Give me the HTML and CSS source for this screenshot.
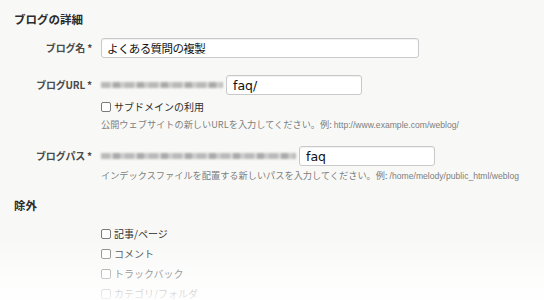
FILE: index.html
```html
<!DOCTYPE html>
<html lang="ja">
  <head>
    <meta charset="UTF-8" />
    <title>ブログの詳細</title>
    <link rel="stylesheet" href="styles.css">
  </head>
  <body>
    <h2 class="section-title">ブログの詳細</h2>

    <div class="field-row first">
      <label class="field-label" for="blogName">ブログ名 *</label>
      <div class="field-body">
        <input id="blogName" class="text-input wide" type="text" value="よくある質問の複製" />
      </div>
    </div>

    <div class="field-row">
      <label class="field-label" for="blogUrl">ブログURL *</label>
      <div class="field-body">
        <div class="inline-field">
          <span class="masked masked-url"></span>
          <input id="blogUrl" class="text-input short latin" type="text" value="faq/" />
        </div>
        <label class="check-line sub">
          <span class="box"></span>サブドメインの利用
        </label>
        <p class="hint">公開ウェブサイトの新しいURLを入力してください。例: <span class="latin-hint">http://www.example.com/weblog/</span></p>
      </div>
    </div>

    <div class="field-row">
      <label class="field-label" for="blogPath">ブログパス *</label>
      <div class="field-body">
        <div class="inline-field">
          <span class="masked masked-path"></span>
          <input id="blogPath" class="text-input short latin" type="text" value="faq" />
        </div>
        <p class="hint tight">インデックスファイルを配置する新しいパスを入力してください。例: <span class="latin-hint">/home/melody/public_html/weblog</span></p>
      </div>
    </div>

    <h2 class="section-title exclude">除外</h2>

    <ul class="exclude-list">
      <li class="check-line"><span class="box"></span>記事/ページ</li>
      <li class="check-line"><span class="box"></span>コメント</li>
      <li class="check-line"><span class="box"></span>トラックバック</li>
      <li class="check-line"><span class="box"></span>カテゴリ/フォルダ</li>
    </ul>

    <div class="fade"></div>
  </body>
</html>
```

FILE: styles.css
```css
body {
  margin: 0;
  padding: 12px 0 0;
  background-color: #f8f9f7;
  color: #333;
  font-family: "Noto Sans CJK JP", "Liberation Sans", sans-serif;
  height: 288px;
  overflow: hidden;
  position: relative;
}
.section-title {
  margin: 0 0 0 14px;
  font-size: 11.5px;
  line-height: 14px;
  font-weight: bold;
  color: #2b2b2b;
}
.section-title.exclude {
  margin-top: 16px;
}
.field-row {
  display: grid;
  grid-template-columns: 92px 1fr;
  column-gap: 9px;
  align-items: start;
  margin-top: 17px;
}
.field-row.first {
  margin-top: 12px;
}
.field-row + .field-row + .field-row {
  margin-top: 15px;
}
.field-label {
  text-align: right;
  font-size: 10px;
  line-height: 20px;
  font-weight: bold;
  color: #4a4a4a;
  letter-spacing: -0.2px;
}
.field-body {
  display: flex;
  flex-direction: column;
  align-items: flex-start;
}
.inline-field {
  display: flex;
  align-items: center;
  gap: 3px;
}
.text-input {
  box-sizing: border-box;
  height: 20px;
  margin: 0;
  padding: 0 5px;
  border: 1px solid #c9c9c9;
  border-radius: 3px;
  background-color: #fff;
  box-shadow: inset 0 1px 1px rgba(0, 0, 0, 0.06);
  font-family: "Noto Sans CJK JP", sans-serif;
  font-size: 11.5px;
  letter-spacing: -0.6px;
  color: #111;
  outline: none;
}
.text-input.wide {
  width: 318px;
}
.text-input.short {
  width: 136px;
}
.text-input.latin {
  font-family: "DejaVu Sans", sans-serif;
  font-size: 12.5px;
  letter-spacing: 0;
  padding-left: 6px;
}
.masked {
  display: inline-block;
  height: 6px;
  background: repeating-linear-gradient(90deg, #b9b9b9 0 9px, #d6d6d6 9px 12px, #a9a9a9 12px 19px, #cbcbcb 19px 24px);
  filter: blur(0.8px);
}
.masked-url {
  width: 122px;
}
.masked-path {
  width: 195px;
}
.check-line {
  display: flex;
  align-items: center;
  gap: 3px;
  font-size: 10px;
  line-height: 14px;
  color: #2e2e2e;
}
.check-line.sub {
  margin-top: 5px;
}
.box {
  box-sizing: border-box;
  width: 10px;
  height: 10px;
  border: 1px solid #7a7a7a;
  border-radius: 2px;
  background-color: #fff;
}
.hint {
  margin: 4px 0 0;
  font-size: 9.2px;
  line-height: 12px;
  color: #7d7d7d;
  white-space: nowrap;
}
.hint.tight {
  margin-top: 3px;
}
.latin-hint {
  font-family: "Liberation Sans", sans-serif;
  font-size: 8.6px;
}
.exclude-list {
  list-style: none;
  margin: 12px 0 0 101px;
  padding: 0;
}
.exclude-list .check-line {
  line-height: 20px;
}
.fade {
  position: absolute;
  left: 0;
  right: 0;
  bottom: 0;
  height: 62px;
  background: linear-gradient(rgba(255, 255, 255, 0), rgba(255, 255, 255, 0.92));
  pointer-events: none;
}
```
